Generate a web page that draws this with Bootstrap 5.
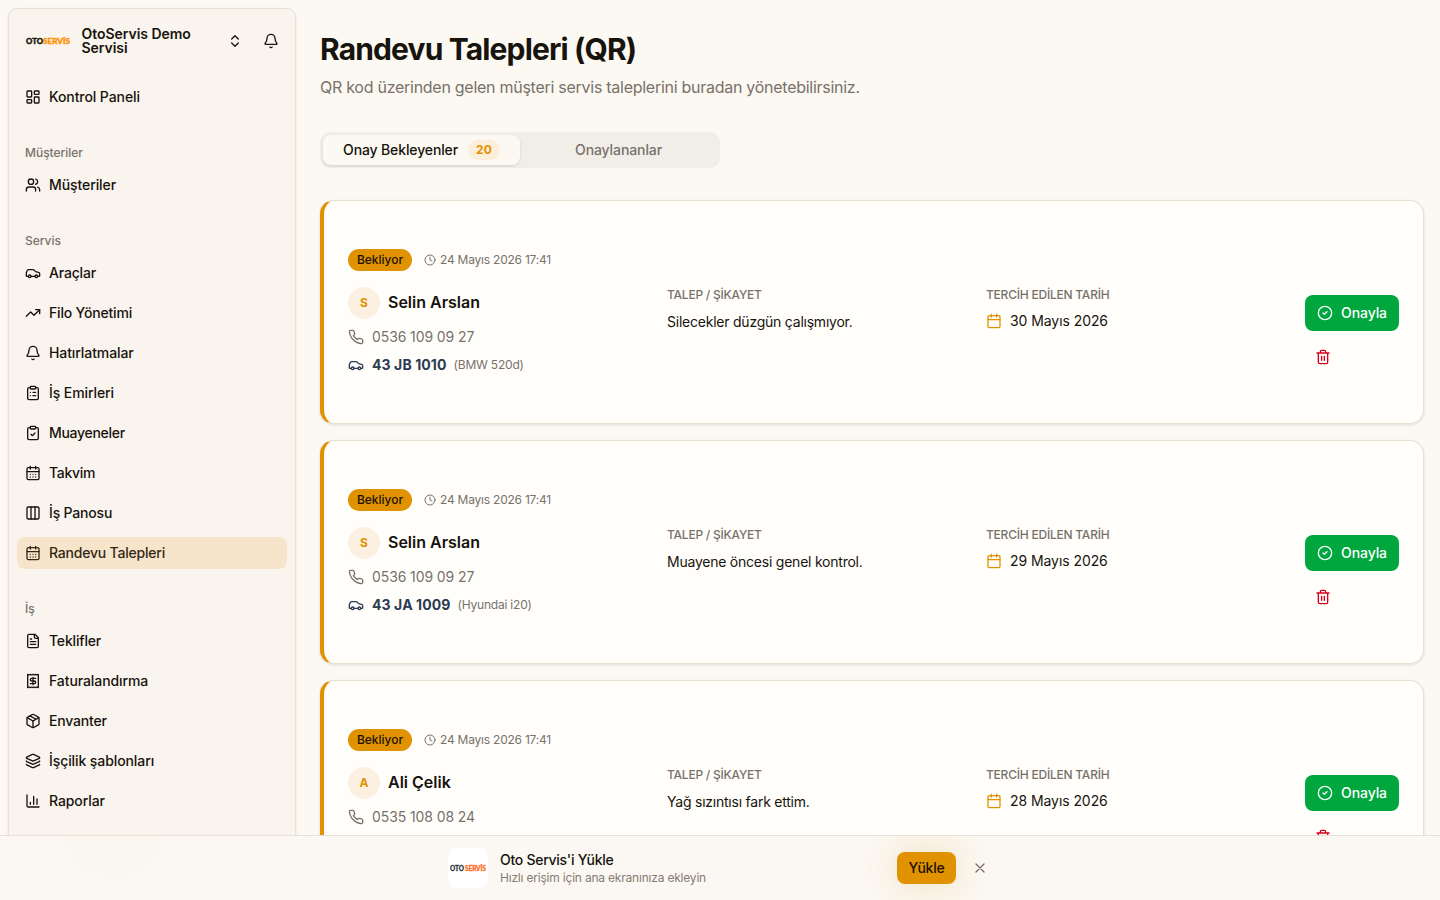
<!DOCTYPE html>
<html lang="tr">
<head>
<meta charset="utf-8">
<meta name="viewport" content="width=device-width, initial-scale=1">
<title>Randevu Talepleri (QR)</title>
<link rel="stylesheet" href="https://cdn.jsdelivr.net/npm/bootstrap@5.3.0/dist/css/bootstrap.min.css">
<style>
:root{--ink:#17130d;--soft:#78716a;--line:#e8e0d3;--amber:#e19200}
body{font-family:Inter,"Liberation Sans",sans-serif;font-size:14px;line-height:20px;color:var(--ink);background:#fcf9f2;height:100vh;overflow:hidden}
svg.ic{width:16px;height:16px;flex:none;fill:none;stroke:currentColor;stroke-width:2;stroke-linecap:round;stroke-linejoin:round}
.muted{color:var(--soft)}
.tiny{font-size:12px;line-height:16px}
.layout{height:900px}
.side{width:288px;margin:8px 0 0 8px;height:884px;background:#f9f4ee;border:1px solid var(--line);border-radius:10px;box-shadow:0 1px 3px rgba(60,40,10,.1)}
.brand{padding:0 16px;height:64px}
.brand-name{font-weight:600;line-height:14px;letter-spacing:-.04px;width:120px;margin-left:10.500px}
.brand .swap{margin-left:25px}
.side-group{padding:8px}
.side-group+.side-group{margin-top:8px}
.side-label{height:32px;padding:0 8px;font-size:12px;font-weight:500;color:#78726b;letter-spacing:-.02px}
.side .nav{gap:8px}
.side .nav-link{height:32px;padding:0 8px;gap:8px;border-radius:8px;color:var(--ink);font-weight:500;letter-spacing:-.09px}
.side .nav-link.n1{letter-spacing:-.18px}
.side .nav-link.n2{letter-spacing:-.29px}
.side .nav-link.active{background:#f6e5cb;color:#352715;letter-spacing:-.21px}
.content{padding:31px 16px 0 24px;min-width:0}
.title{font-size:30px;line-height:36px;font-weight:700;letter-spacing:-.86px;margin:0}
.sub{font-size:16px;line-height:24px;letter-spacing:-.27px;margin:8px 0 0}
.seg{width:400px;height:36px;margin-top:33px;padding:3px;background:#f1eee8;border-radius:10px}
.seg .nav-link{padding:0;height:30px;font-weight:500;border-radius:8px;color:#78716a;letter-spacing:-.1px;width:197px}
.seg .nav-link.active{background:#fcf9f3;color:var(--ink);box-shadow:0 1px 3px rgba(0,0,0,.13);letter-spacing:-.13px}
.count{width:32px;height:20px;margin-left:10px;background:#fbeedb;color:var(--amber);font-size:12px;font-weight:700;letter-spacing:.1px;border-radius:10px}
.req-list{margin-top:32px;gap:16px}
.req{height:224px;flex:none;background:#fffefb;border:1px solid var(--line);border-left:4px solid var(--amber);border-radius:14px;box-shadow:0 1px 3px rgba(60,40,10,.13);padding:48px 24px}
.req-grid{display:grid;grid-template-columns:1fr 1fr 1fr 94px;column-gap:24px;height:126px}
.pill{height:22px;width:64px;border-radius:11px;background:var(--amber);font-size:12px;font-weight:500;color:#1c1202}
.when{letter-spacing:-.22px;gap:4px}
.when svg{width:12px;height:12px}
.ava{width:32px;height:32px;background:#fcf1e0;color:var(--amber);font-size:12px;font-weight:700}
.who{font-size:16px;line-height:24px;font-weight:600;padding-bottom:2px}
.phone{letter-spacing:-.1px}
.plate{font-weight:700;color:#2b3b52;letter-spacing:.1px}
.model{letter-spacing:-.2px;margin-left:-1px}
.mid{padding-top:38px}
.cap{font-weight:500;letter-spacing:-.23px;font-size:12px;line-height:16px}
.note{letter-spacing:-.23px;line-height:23px;margin-top:7px}
.day{margin-top:8px;gap:8px;letter-spacing:-.07px}
.day svg{color:var(--amber)}
.acts{padding-top:46px}
.btn-ok{width:94px;height:36px;padding:0;background:#00a63e;color:#fff;font-size:14px;line-height:20px;font-weight:500;border:0;border-radius:8px;gap:8px;letter-spacing:-.08px}
.btn-del{width:36px;height:36px;padding:0;color:#d4001c;border:0}
.install{height:65px;background:radial-gradient(ellipse 50px 44px at 114px 0,#faf6f0 92%,transparent 100%),#fbf8f3;border-top:1px solid var(--line)}
.install-in{width:544px;height:64px}
.app-icon{width:40px;height:40px;border-radius:10px;background:#fff}
.in-title{font-weight:500;letter-spacing:-.27px}
.in-sub{letter-spacing:-.2px;color:#857c71}
.btn-get{width:59px;height:32px;padding:0;background:var(--amber);color:#1c1202;font-size:14px;line-height:20px;font-weight:500;letter-spacing:-.2px;border:0;border-radius:8px;box-shadow:0 0 40px 4px rgba(225,146,0,.2)}
.logo-t{font-family:Lato,sans-serif;font-weight:900}
</style>
</head>
<body>
<svg class="d-none">
<symbol id="dash" viewBox="0 0 24 24"><rect width="7" height="9" x="3" y="3" rx="1"/><rect width="7" height="5" x="14" y="3" rx="1"/><rect width="7" height="9" x="14" y="12" rx="1"/><rect width="7" height="5" x="3" y="16" rx="1"/></symbol>
<symbol id="users" viewBox="0 0 24 24"><path d="M16 21v-2a4 4 0 0 0-4-4H6a4 4 0 0 0-4 4v2"/><circle cx="9" cy="7" r="4"/><path d="M22 21v-2a4 4 0 0 0-3-3.870M16 3.130a4 4 0 0 1 0 7.750"/></symbol>
<symbol id="car" viewBox="0 0 24 24"><path d="M19 17h2c.6 0 1-.4 1-1v-3c0-.9-.7-1.700-1.500-1.900C18.700 10.600 16 10 16 10s-1.300-1.400-2.200-2.300c-.5-.4-1.100-.7-1.800-.7H5c-.6 0-1.100.4-1.400.9l-1.400 2.900A3.700 3.700 0 0 0 2 12v4c0 .6.4 1 1 1h2"/><circle cx="7" cy="17" r="2"/><path d="M9 17h6"/><circle cx="17" cy="17" r="2"/></symbol>
<symbol id="trend" viewBox="0 0 24 24"><path d="M16 7h6v6"/><path d="m22 7-8.500 8.500-5-5L2 17"/></symbol>
<symbol id="bell" viewBox="0 0 24 24"><path d="M10.268 21a2 2 0 0 0 3.464 0"/><path d="M3.262 15.326A1 1 0 0 0 4 17h16a1 1 0 0 0 .74-1.673C19.410 13.956 18 12.499 18 8A6 6 0 0 0 6 8c0 4.499-1.411 5.956-2.738 7.326"/></symbol>
<symbol id="cliplist" viewBox="0 0 24 24"><rect width="8" height="4" x="8" y="2" rx="1"/><path d="M16 4h2a2 2 0 0 1 2 2v14a2 2 0 0 1-2 2H6a2 2 0 0 1-2-2V6a2 2 0 0 1 2-2h2"/><path d="M12 11h4M12 16h4M8 11h.01M8 16h.01"/></symbol>
<symbol id="clipcheck" viewBox="0 0 24 24"><rect width="8" height="4" x="8" y="2" rx="1"/><path d="M16 4h2a2 2 0 0 1 2 2v14a2 2 0 0 1-2 2H6a2 2 0 0 1-2-2V6a2 2 0 0 1 2-2h2"/><path d="m9 14 2 2 4-4"/></symbol>
<symbol id="caldays" viewBox="0 0 24 24"><path d="M8 2v4M16 2v4"/><rect width="18" height="18" x="3" y="4" rx="2"/><path d="M3 10h18M8 14h.01M12 14h.01M16 14h.01M8 18h.01M12 18h.01M16 18h.01"/></symbol>
<symbol id="cal" viewBox="0 0 24 24"><path d="M8 2v4M16 2v4"/><rect width="18" height="18" x="3" y="4" rx="2"/><path d="M3 10h18"/></symbol>
<symbol id="cols" viewBox="0 0 24 24"><rect width="18" height="18" x="3" y="3" rx="2"/><path d="M9 3v18M15 3v18"/></symbol>
<symbol id="doc" viewBox="0 0 24 24"><path d="M15 2H6a2 2 0 0 0-2 2v16a2 2 0 0 0 2 2h12a2 2 0 0 0 2-2V7Z"/><path d="M14 2v4a2 2 0 0 0 2 2h4M10 9H8M16 13H8M16 17H8"/></symbol>
<symbol id="receipt" viewBox="0 0 24 24"><path d="M4 2v20l2-1 2 1 2-1 2 1 2-1 2 1 2-1 2 1V2l-2 1-2-1-2 1-2-1-2 1-2-1-2 1Z"/><path d="M16 8h-6a2 2 0 1 0 0 4h4a2 2 0 1 1 0 4H8M12 17.500v-11"/></symbol>
<symbol id="box" viewBox="0 0 24 24"><path d="M11 21.730a2 2 0 0 0 2 0l7-4A2 2 0 0 0 21 16V8a2 2 0 0 0-1-1.730l-7-4a2 2 0 0 0-2 0l-7 4A2 2 0 0 0 3 8v8a2 2 0 0 0 1 1.730zM12 22V12"/><path d="m3.290 7 8.710 5 8.710-5M7.500 4.270l9 5.150"/></symbol>
<symbol id="layers" viewBox="0 0 24 24"><path d="M12.830 2.180a2 2 0 0 0-1.660 0L2.600 6.080a1 1 0 0 0 0 1.830l8.580 3.910a2 2 0 0 0 1.660 0l8.580-3.900a1 1 0 0 0 0-1.830z"/><path d="M2 12a1 1 0 0 0 .58.910l8.600 3.910a2 2 0 0 0 1.650 0l8.580-3.900A1 1 0 0 0 22 12"/><path d="M2 17a1 1 0 0 0 .58.910l8.600 3.910a2 2 0 0 0 1.650 0l8.580-3.900A1 1 0 0 0 22 17"/></symbol>
<symbol id="chart" viewBox="0 0 24 24"><path d="M3 3v16a2 2 0 0 0 2 2h16M18 17V9M13 17V5M8 17v-3"/></symbol>
<symbol id="updown" viewBox="0 0 24 24"><path d="m7 15 5 5 5-5M7 9l5-5 5 5"/></symbol>
<symbol id="clock" viewBox="0 0 24 24"><circle cx="12" cy="12" r="10"/><path d="M12 6v6l4 2"/></symbol>
<symbol id="phone" viewBox="0 0 24 24"><path d="M22 16.920v3a2 2 0 0 1-2.180 2 19.790 19.790 0 0 1-8.630-3.070 19.500 19.500 0 0 1-6-6 19.790 19.790 0 0 1-3.070-8.670A2 2 0 0 1 4.110 2h3a2 2 0 0 1 2 1.720 12.840 12.840 0 0 0 .7 2.810 2 2 0 0 1-.45 2.110L8.090 9.910a16 16 0 0 0 6 6l1.270-1.270a2 2 0 0 1 2.110-.45 12.840 12.840 0 0 0 2.810.7A2 2 0 0 1 22 16.920z"/></symbol>
<symbol id="ok" viewBox="0 0 24 24"><circle cx="12" cy="12" r="10"/><path d="m9 12 2 2 4-4"/></symbol>
<symbol id="trash" viewBox="0 0 24 24"><path d="M3 6h18M19 6v14c0 1-1 2-2 2H7c-1 0-2-1-2-2V6M8 6V4c0-1 1-2 2-2h4c1 0 2 1 2 2v2M10 11v6M14 11v6"/></symbol>
<symbol id="x" viewBox="0 0 24 24"><path d="M18 6 6 18M6 6l12 12"/></symbol>
</svg>

<div class="layout d-flex">
<aside class="side flex-shrink-0 overflow-hidden">
  <div class="brand d-flex align-items-center">
    <svg width="46" height="12" viewBox="0 0 46 12" class="flex-shrink-0 logo-t"><text x="1" y="9" font-size="8" textLength="17" lengthAdjust="spacingAndGlyphs" fill="#17130d" stroke="#17130d" stroke-width=".4">OTO</text><text x="18" y="9" font-size="8" textLength="27" lengthAdjust="spacingAndGlyphs" fill="#ff9100" stroke="#ff9100" stroke-width=".4">SERVİS</text></svg>
    <div class="brand-name">OtoServis Demo Servisi</div>
    <svg class="ic swap"><use href="#updown"/></svg>
    <svg class="ic ms-auto"><use href="#bell"/></svg>
  </div>
  <div class="side-group"><nav class="nav flex-column">
    <a class="nav-link d-flex align-items-center"><svg class="ic"><use href="#dash"/></svg>Kontrol Paneli</a>
  </nav></div>
  <div class="side-group"><div class="side-label d-flex align-items-center">Müşteriler</div><nav class="nav flex-column">
    <a class="nav-link d-flex align-items-center"><svg class="ic"><use href="#users"/></svg>Müşteriler</a>
  </nav></div>
  <div class="side-group"><div class="side-label d-flex align-items-center">Servis</div><nav class="nav flex-column">
    <a class="nav-link n1 d-flex align-items-center"><svg class="ic"><use href="#car"/></svg>Araçlar</a>
    <a class="nav-link n1 d-flex align-items-center"><svg class="ic"><use href="#trend"/></svg>Filo Yönetimi</a>
    <a class="nav-link d-flex align-items-center"><svg class="ic"><use href="#bell"/></svg>Hatırlatmalar</a>
    <a class="nav-link d-flex align-items-center"><svg class="ic"><use href="#cliplist"/></svg>İş Emirleri</a>
    <a class="nav-link n2 d-flex align-items-center"><svg class="ic"><use href="#clipcheck"/></svg>Muayeneler</a>
    <a class="nav-link n2 d-flex align-items-center"><svg class="ic"><use href="#caldays"/></svg>Takvim</a>
    <a class="nav-link n1 d-flex align-items-center"><svg class="ic"><use href="#cols"/></svg>İş Panosu</a>
    <a class="nav-link active d-flex align-items-center"><svg class="ic"><use href="#caldays"/></svg>Randevu Talepleri</a>
  </nav></div>
  <div class="side-group"><div class="side-label d-flex align-items-center">İş</div><nav class="nav flex-column">
    <a class="nav-link n1 d-flex align-items-center"><svg class="ic"><use href="#doc"/></svg>Teklifler</a>
    <a class="nav-link d-flex align-items-center"><svg class="ic"><use href="#receipt"/></svg>Faturalandırma</a>
    <a class="nav-link n1 d-flex align-items-center"><svg class="ic"><use href="#box"/></svg>Envanter</a>
    <a class="nav-link d-flex align-items-center"><svg class="ic"><use href="#layers"/></svg>İşçilik şablonları</a>
    <a class="nav-link d-flex align-items-center"><svg class="ic"><use href="#chart"/></svg>Raporlar</a>
  </nav></div>
</aside>

<main class="content flex-grow-1">
  <h1 class="title">Randevu Talepleri (QR)</h1>
  <p class="sub muted">QR kod üzerinden gelen müşteri servis taleplerini buradan yönetebilirsiniz.</p>
  <div class="seg nav flex-nowrap">
    <a class="nav-link active d-flex align-items-center justify-content-center">Onay Bekleyenler<span class="count d-flex align-items-center justify-content-center">20</span></a>
    <a class="nav-link d-flex align-items-center justify-content-center">Onaylananlar</a>
  </div>

  <div class="req-list d-flex flex-column">
    <article class="req"><div class="req-grid">
      <div>
        <div class="d-flex align-items-center gap-2 mb-3"><span class="pill d-flex align-items-center justify-content-center">Bekliyor</span><span class="when tiny muted d-flex align-items-center ms-1"><svg class="ic"><use href="#clock"/></svg>24 Mayıs 2026 17:41</span></div>
        <div class="d-flex align-items-center gap-2 mb-2"><span class="ava rounded-circle d-flex align-items-center justify-content-center">S</span><span class="who">Selin Arslan</span></div>
        <div class="phone muted d-flex align-items-center gap-2 mb-2"><svg class="ic"><use href="#phone"/></svg>0536 109 09 27</div>
        <div class="plate d-flex align-items-center gap-2"><svg class="ic"><use href="#car"/></svg>43 JB 1010 <span class="model tiny muted fw-normal">(BMW 520d)</span></div>
      </div>
      <div class="mid"><div class="cap muted">TALEP / ŞİKAYET</div><div class="note">Silecekler düzgün çalışmıyor.</div></div>
      <div class="mid"><div class="cap muted">TERCİH EDİLEN TARİH</div><div class="day d-flex align-items-center"><svg class="ic"><use href="#cal"/></svg>30 Mayıs 2026</div></div>
      <div class="acts d-flex flex-column gap-2"><button class="btn btn-ok d-flex align-items-center justify-content-center"><svg class="ic"><use href="#ok"/></svg>Onayla</button><button class="btn btn-del d-flex align-items-center justify-content-center"><svg class="ic"><use href="#trash"/></svg></button></div>
    </div></article>

    <article class="req"><div class="req-grid">
      <div>
        <div class="d-flex align-items-center gap-2 mb-3"><span class="pill d-flex align-items-center justify-content-center">Bekliyor</span><span class="when tiny muted d-flex align-items-center ms-1"><svg class="ic"><use href="#clock"/></svg>24 Mayıs 2026 17:41</span></div>
        <div class="d-flex align-items-center gap-2 mb-2"><span class="ava rounded-circle d-flex align-items-center justify-content-center">S</span><span class="who">Selin Arslan</span></div>
        <div class="phone muted d-flex align-items-center gap-2 mb-2"><svg class="ic"><use href="#phone"/></svg>0536 109 09 27</div>
        <div class="plate d-flex align-items-center gap-2"><svg class="ic"><use href="#car"/></svg>43 JA 1009 <span class="model tiny muted fw-normal">(Hyundai i20)</span></div>
      </div>
      <div class="mid"><div class="cap muted">TALEP / ŞİKAYET</div><div class="note">Muayene öncesi genel kontrol.</div></div>
      <div class="mid"><div class="cap muted">TERCİH EDİLEN TARİH</div><div class="day d-flex align-items-center"><svg class="ic"><use href="#cal"/></svg>29 Mayıs 2026</div></div>
      <div class="acts d-flex flex-column gap-2"><button class="btn btn-ok d-flex align-items-center justify-content-center"><svg class="ic"><use href="#ok"/></svg>Onayla</button><button class="btn btn-del d-flex align-items-center justify-content-center"><svg class="ic"><use href="#trash"/></svg></button></div>
    </div></article>

    <article class="req"><div class="req-grid">
      <div>
        <div class="d-flex align-items-center gap-2 mb-3"><span class="pill d-flex align-items-center justify-content-center">Bekliyor</span><span class="when tiny muted d-flex align-items-center ms-1"><svg class="ic"><use href="#clock"/></svg>24 Mayıs 2026 17:41</span></div>
        <div class="d-flex align-items-center gap-2 mb-2"><span class="ava rounded-circle d-flex align-items-center justify-content-center">A</span><span class="who">Ali Çelik</span></div>
        <div class="phone muted d-flex align-items-center gap-2 mb-2"><svg class="ic"><use href="#phone"/></svg>0535 108 08 24</div>
      </div>
      <div class="mid"><div class="cap muted">TALEP / ŞİKAYET</div><div class="note">Yağ sızıntısı fark ettim.</div></div>
      <div class="mid"><div class="cap muted">TERCİH EDİLEN TARİH</div><div class="day d-flex align-items-center"><svg class="ic"><use href="#cal"/></svg>28 Mayıs 2026</div></div>
      <div class="acts d-flex flex-column gap-2"><button class="btn btn-ok d-flex align-items-center justify-content-center"><svg class="ic"><use href="#ok"/></svg>Onayla</button><button class="btn btn-del d-flex align-items-center justify-content-center"><svg class="ic"><use href="#trash"/></svg></button></div>
    </div></article>
  </div>
</main>
</div>

<div class="install fixed-bottom overflow-hidden">
  <div class="install-in mx-auto d-flex align-items-center">
    <div class="app-icon d-flex align-items-center justify-content-center flex-shrink-0"><svg width="36" height="10" viewBox="0 0 36 10" class="logo-t"><text x="0" y="7.500" font-size="6.500" textLength="14" lengthAdjust="spacingAndGlyphs" fill="#333a44" stroke="#333a44" stroke-width=".3">OTO</text><text x="15" y="7.500" font-size="6.500" textLength="21" lengthAdjust="spacingAndGlyphs" fill="#ff6a1f" stroke="#ff6a1f" stroke-width=".3">SERVİS</text></svg></div>
    <div class="ms-2 ps-1"><div class="in-title">Oto Servis'i Yükle</div><div class="in-sub tiny">Hızlı erişim için ana ekranınıza ekleyin</div></div>
    <button class="btn btn-get ms-auto">Yükle</button>
    <svg class="ic muted ms-3 me-1"><use href="#x"/></svg>
  </div>
</div>
<script src="https://cdn.jsdelivr.net/npm/bootstrap@5.3.0/dist/js/bootstrap.bundle.min.js"></script>
</body>
</html>
